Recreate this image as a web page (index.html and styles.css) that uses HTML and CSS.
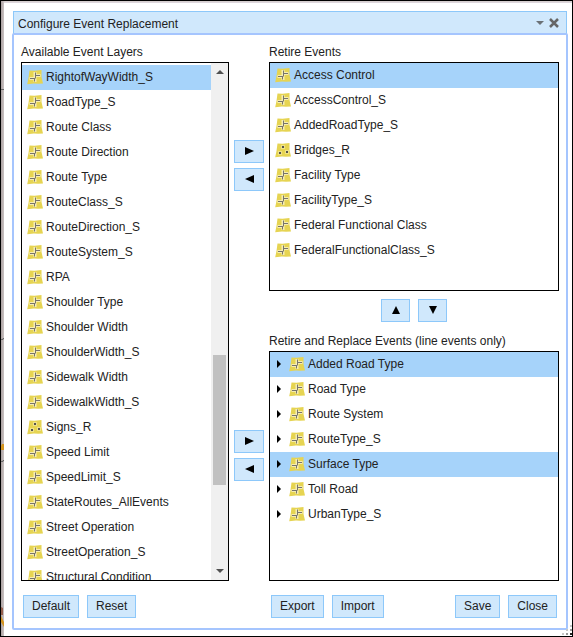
FILE: index.html
```html
<!DOCTYPE html>
<html lang="en">
<head>
<meta charset="utf-8">
<title>Configure Event Replacement</title>
<link rel="stylesheet" href="styles.css">
</head>
<body>
<svg class="defs" aria-hidden="true">
  <symbol id="line" viewBox="0 0 16 16">
    <path d="M2.500 1.500l5 .3L14.500 1v7l1.500 6.500-5 .3-4-.3-6.800.8L1.500 9z" fill="#e6d452"/>
    <path d="M2.500 9.500H8M8 3v10M8 6.500h5.500" fill="none" stroke="#f6edb4" stroke-width="3"/>
    <path d="M3 9.500h4.500M7.500 9v3.500M8.500 3.500v6M8.500 6.500H13" fill="none" stroke="#77746a" stroke-width="1"/>
  </symbol>
  <symbol id="point" viewBox="0 0 16 16">
    <path d="M2.500 1.500l5 .3L14.500 1v7l1.500 6.500-5 .3-4-.3-6.800.8L1.500 9z" fill="#e6d452"/>
    <path d="M6 3h4v4H6zM3 9h4v4H3zM10 8h4v4h-4z" fill="#efe28a"/>
    <path d="M7 4h2v2H7zM4 10h2v2H4zM11 9h2v2h-2z" fill="#55534d"/>
  </symbol>
</svg>
<main class="screen">
  <svg class="backdrop" width="3" height="635" aria-hidden="true">
    <path d="M0 88.500h3M0 338.500h2v-1h1M0 460.500h2v-1h1" fill="none" stroke="#666"/>
    <path d="M0 445l1-2h2v6H0zM0 615l3 6v5l-3-5z" fill="#d4941f"/>
    <path d="M0 606l2 1v7H0z" fill="#96604e"/>
  </svg>
  <section class="dialog">
    <header class="titlebar">
      <h1>Configure Event Replacement</h1>
      <button class="tool" aria-label="Collapse"><svg width="8" height="4"><path d="M0 0h8L4 4z" fill="#6b7176"/></svg></button>
      <button class="tool" aria-label="Close window"><svg width="10" height="10"><path d="M1 1l8 8M9 1L1 9" stroke="#666" stroke-width="2.500"/></svg></button>
    </header>
    <div class="body">
      <div class="columns">
        <h2 class="label">Available Event Layers</h2>
        <h2 class="label right">Retire Events</h2>
        <div class="list available">
          <ul class="rows">
            <li class="selected"><svg class="icon"><use href="#line"/></svg>RightofWayWidth_S</li>
            <li><svg class="icon"><use href="#line"/></svg>RoadType_S</li>
            <li><svg class="icon"><use href="#line"/></svg>Route Class</li>
            <li><svg class="icon"><use href="#line"/></svg>Route Direction</li>
            <li><svg class="icon"><use href="#line"/></svg>Route Type</li>
            <li><svg class="icon"><use href="#line"/></svg>RouteClass_S</li>
            <li><svg class="icon"><use href="#line"/></svg>RouteDirection_S</li>
            <li><svg class="icon"><use href="#line"/></svg>RouteSystem_S</li>
            <li><svg class="icon"><use href="#line"/></svg>RPA</li>
            <li><svg class="icon"><use href="#line"/></svg>Shoulder Type</li>
            <li><svg class="icon"><use href="#line"/></svg>Shoulder Width</li>
            <li><svg class="icon"><use href="#line"/></svg>ShoulderWidth_S</li>
            <li><svg class="icon"><use href="#line"/></svg>Sidewalk Width</li>
            <li><svg class="icon"><use href="#line"/></svg>SidewalkWidth_S</li>
            <li><svg class="icon"><use href="#point"/></svg>Signs_R</li>
            <li><svg class="icon"><use href="#line"/></svg>Speed Limit</li>
            <li><svg class="icon"><use href="#line"/></svg>SpeedLimit_S</li>
            <li><svg class="icon"><use href="#line"/></svg>StateRoutes_AllEvents</li>
            <li><svg class="icon"><use href="#line"/></svg>Street Operation</li>
            <li><svg class="icon"><use href="#line"/></svg>StreetOperation_S</li>
            <li><svg class="icon"><use href="#line"/></svg>Structural Condition</li>
          </ul>
          <div class="scrollbar" aria-hidden="true">
            <svg width="8" height="4"><path d="M0 4h8L4 0z" fill="#505050"/></svg>
            <div class="above"></div>
            <div class="thumb"></div>
            <div class="below"></div>
            <svg width="8" height="4"><path d="M0 0h8L4 4z" fill="#505050"/></svg>
          </div>
        </div>
        <div class="movers">
          <button class="btn" aria-label="Add to retire"><svg width="9" height="8"><path d="M0 0l9 4-9 4z"/></svg></button>
          <button class="btn" aria-label="Remove from retire"><svg width="9" height="8"><path d="M9 0L0 4l9 4z"/></svg></button>
        </div>
        <ul class="list rows">
          <li class="selected"><svg class="icon"><use href="#line"/></svg>Access Control</li>
          <li><svg class="icon"><use href="#line"/></svg>AccessControl_S</li>
          <li><svg class="icon"><use href="#line"/></svg>AddedRoadType_S</li>
          <li><svg class="icon"><use href="#point"/></svg>Bridges_R</li>
          <li><svg class="icon"><use href="#line"/></svg>Facility Type</li>
          <li><svg class="icon"><use href="#line"/></svg>FacilityType_S</li>
          <li><svg class="icon"><use href="#line"/></svg>Federal Functional Class</li>
          <li><svg class="icon"><use href="#line"/></svg>FederalFunctionalClass_S</li>
        </ul>
        <div class="between">
          <div class="order">
            <button class="btn" aria-label="Move up"><svg width="8" height="8"><path d="M0 8h8L4 0z"/></svg></button>
            <button class="btn" aria-label="Move down"><svg width="8" height="8"><path d="M0 0h8L4 8z"/></svg></button>
          </div>
          <h2 class="label">Retire and Replace Events (line events only)</h2>
        </div>
        <div class="movers">
          <button class="btn" aria-label="Add to replace"><svg width="9" height="8"><path d="M0 0l9 4-9 4z"/></svg></button>
          <button class="btn" aria-label="Remove from replace"><svg width="9" height="8"><path d="M9 0L0 4l9 4z"/></svg></button>
        </div>
        <ul class="list rows tree">
          <li class="selected"><svg class="caret"><path d="M0 0l4 4-4 4z"/></svg><svg class="icon"><use href="#line"/></svg>Added Road Type</li>
          <li><svg class="caret"><path d="M0 0l4 4-4 4z"/></svg><svg class="icon"><use href="#line"/></svg>Road Type</li>
          <li><svg class="caret"><path d="M0 0l4 4-4 4z"/></svg><svg class="icon"><use href="#line"/></svg>Route System</li>
          <li><svg class="caret"><path d="M0 0l4 4-4 4z"/></svg><svg class="icon"><use href="#line"/></svg>RouteType_S</li>
          <li class="selected"><svg class="caret"><path d="M0 0l4 4-4 4z"/></svg><svg class="icon"><use href="#line"/></svg>Surface Type</li>
          <li><svg class="caret"><path d="M0 0l4 4-4 4z"/></svg><svg class="icon"><use href="#line"/></svg>Toll Road</li>
          <li><svg class="caret"><path d="M0 0l4 4-4 4z"/></svg><svg class="icon"><use href="#line"/></svg>UrbanType_S</li>
        </ul>
        <footer class="actions start">
          <button class="btn">Default</button>
          <button class="btn">Reset</button>
        </footer>
        <footer class="actions end">
          <button class="btn">Export</button>
          <button class="btn">Import</button>
          <span class="spacer"></span>
          <button class="btn">Save</button>
          <button class="btn">Close</button>
        </footer>
      </div>
    </div>
    <svg class="grip" width="10" height="10" aria-hidden="true">
      <path d="M8 0h2v2H8zM4 4h2v2H4zM0 8h2v2H0z" fill="#c8c8c8"/>
      <path d="M8 4h2v2H8zM4 8h2v2H4z" fill="#999"/>
      <path d="M8 8h2v2H8z" fill="#222"/>
    </svg>
  </section>
</main>
</body>
</html>
```
FILE: styles.css
```css
* { box-sizing: border-box; }
body {
  margin: 0;
  font: 12px/16px "Liberation Sans", Arial, sans-serif;
  color: #222;
}
h1, h2, ul { margin: 0; padding: 0; font: inherit; }
.defs { position: absolute; width: 0; height: 0; }
.screen {
  position: relative;
  height: 100vh;
  min-height: 480px;
  display: flex;
  border: 1px solid #000;
  padding: 1px 0 0 3px;
  background: linear-gradient(90deg, #aaa0a0, #d6cfcf 4px);
}
.backdrop { position: absolute; left: 0; top: 0; }
.dialog {
  position: relative;
  flex: 1;
  display: flex;
  flex-direction: column;
  padding: 8px 4px 6px 8px;
  border-top: 1px solid #ddd6dc;
  background: #fff;
}
.titlebar {
  display: flex;
  align-items: center;
  gap: 5px;
  height: 23px;
  margin: 0 1px;
  padding: 0 7px 0 4px;
  border: 1px solid #8dc8fa;
  background: #d0e8fc;
}
.titlebar h1 { flex: 1; padding-top: 2px; }
.tool { display: flex; padding: 1px 0 0; border: 0; background: none; }
.body {
  flex: 1;
  min-height: 0;
  display: flex;
  margin-top: -1px;
  padding: 9px 7px 10px;
  border: 2px solid #a5c5fe;
  border-radius: 2px;
}
.columns {
  flex: 1;
  display: grid;
  grid-template-columns: minmax(0, 208fr) 40px minmax(0, 290fr);
  grid-template-rows: 18px minmax(0, 229fr) 60px minmax(0, 230fr) 37px;
}
.label.right { grid-column: 3; }
.list {
  border: 1px solid #000;
  background: #fff;
  overflow: hidden;
}
.available {
  grid-row: 2 / 5;
  display: flex;
  padding-top: 2px;
}
.available .rows { flex: 1; }
.rows { list-style: none; }
.rows li {
  display: flex;
  align-items: center;
  height: 25px;
  padding: 0 0 2px 5px;
  white-space: nowrap;
}
.rows .selected { background: #a6d3fa; }
.icon { width: 16px; height: 16px; margin-right: 3px; flex: none; }
.caret { width: 4px; height: 8px; margin: 0 8px 0 2px; flex: none; }
.scrollbar {
  width: 17px;
  display: flex;
  flex-direction: column;
  align-items: center;
  padding: 7px 0;
  margin-top: -2px;
  background: #f0f0f0;
}
.above { flex: 281; }
.thumb { flex: 130; width: 13px; background: #c1c1c1; }
.below { flex: 84; }
.movers {
  grid-column: 2;
  display: flex;
  flex-direction: column;
  align-items: center;
  justify-content: center;
  gap: 5px;
  padding-bottom: 22px;
}
.btn {
  display: flex;
  align-items: center;
  justify-content: center;
  height: 23px;
  padding: 0 8px 1px;
  border: 1px solid #8dc8fa;
  background: #d0e8fc;
  color: #222;
  font: inherit;
}
.movers .btn { width: 30px; }
.between {
  grid-column: 3;
  display: flex;
  flex-direction: column;
  justify-content: space-between;
  padding: 8px 0 2px;
}
.order { display: flex; justify-content: center; gap: 8px; }
.order .btn { width: 29px; }
.actions { display: flex; align-items: flex-end; gap: 8px; padding: 0 2px; }
.end { grid-column: 3; }
.spacer { flex: 1; }
.grip { position: absolute; right: 0; bottom: 1px; }
```
